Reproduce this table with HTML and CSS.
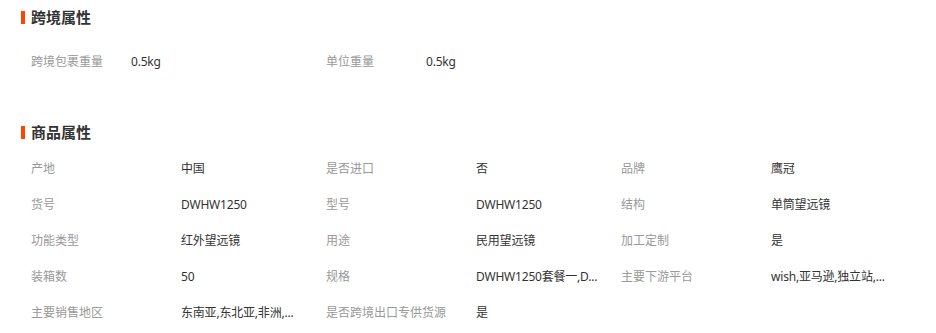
FILE: index.html
```html
<!DOCTYPE html>
<html lang="zh-CN">
<head>
<meta charset="utf-8">
<title>属性</title>
<link rel="stylesheet" href="styles.css">
</head>
<body>
<section class="section section--cross">
  <h2 class="title"><span class="title-bar"></span>跨境属性</h2>
  <div class="props props--narrow">
    <div class="prop"><span class="label">跨境包裹重量</span><span class="value">0.5kg</span></div>
    <div class="prop"><span class="label">单位重量</span><span class="value">0.5kg</span></div>
  </div>
</section>
<section class="section section--goods">
  <h2 class="title"><span class="title-bar"></span>商品属性</h2>
  <div class="props">
    <div class="prop"><span class="label">产地</span><span class="value">中国</span></div>
    <div class="prop"><span class="label">是否进口</span><span class="value">否</span></div>
    <div class="prop"><span class="label">品牌</span><span class="value">鹰冠</span></div>
    <div class="prop"><span class="label">货号</span><span class="value">DWHW1250</span></div>
    <div class="prop"><span class="label">型号</span><span class="value">DWHW1250</span></div>
    <div class="prop"><span class="label">结构</span><span class="value">单筒望远镜</span></div>
    <div class="prop"><span class="label">功能类型</span><span class="value">红外望远镜</span></div>
    <div class="prop"><span class="label">用途</span><span class="value">民用望远镜</span></div>
    <div class="prop"><span class="label">加工定制</span><span class="value">是</span></div>
    <div class="prop"><span class="label">装箱数</span><span class="value">50</span></div>
    <div class="prop"><span class="label">规格</span><span class="value">DWHW1250套餐一,D...</span></div>
    <div class="prop"><span class="label">主要下游平台</span><span class="value">wish,亚马逊,独立站,...</span></div>
    <div class="prop"><span class="label">主要销售地区</span><span class="value">东南亚,东北亚,非洲,...</span></div>
    <div class="prop"><span class="label">是否跨境出口专供货源</span><span class="value">是</span></div>
  </div>
</section>
</body>
</html>
```
FILE: styles.css
```css
html, body {
  margin: 0;
  padding: 0;
  background: #fff;
}
body {
  font-family: "Noto Sans", "Noto Sans CJK SC", sans-serif;
  font-size: 12px;
  color: #333;
}
.section {
  padding-left: 21px;
}
.section--cross {
  padding-top: 7px;
}
.section--goods {
  padding-top: 42px;
}
.title {
  display: flex;
  align-items: center;
  margin: 0;
  height: 20px;
  line-height: 20px;
  font-size: 15px;
  font-weight: bold;
  color: #333;
}
.title-bar {
  width: 4px;
  height: 13px;
  background: #ff4400;
  margin-right: 6px;
}
.props {
  display: grid;
  grid-template-columns: repeat(3, 295px);
  padding-left: 10px;
  padding-top: 9px;
}
.props--narrow {
  padding-top: 17px;
}
.prop {
  display: flex;
  align-items: center;
  height: 36px;
  line-height: 18px;
  white-space: nowrap;
}
.label {
  width: 150px;
  flex: none;
  color: #999;
}
.props--narrow .label {
  width: 100px;
}
.value {
  color: #333;
  letter-spacing: -0.2px;
}
```
